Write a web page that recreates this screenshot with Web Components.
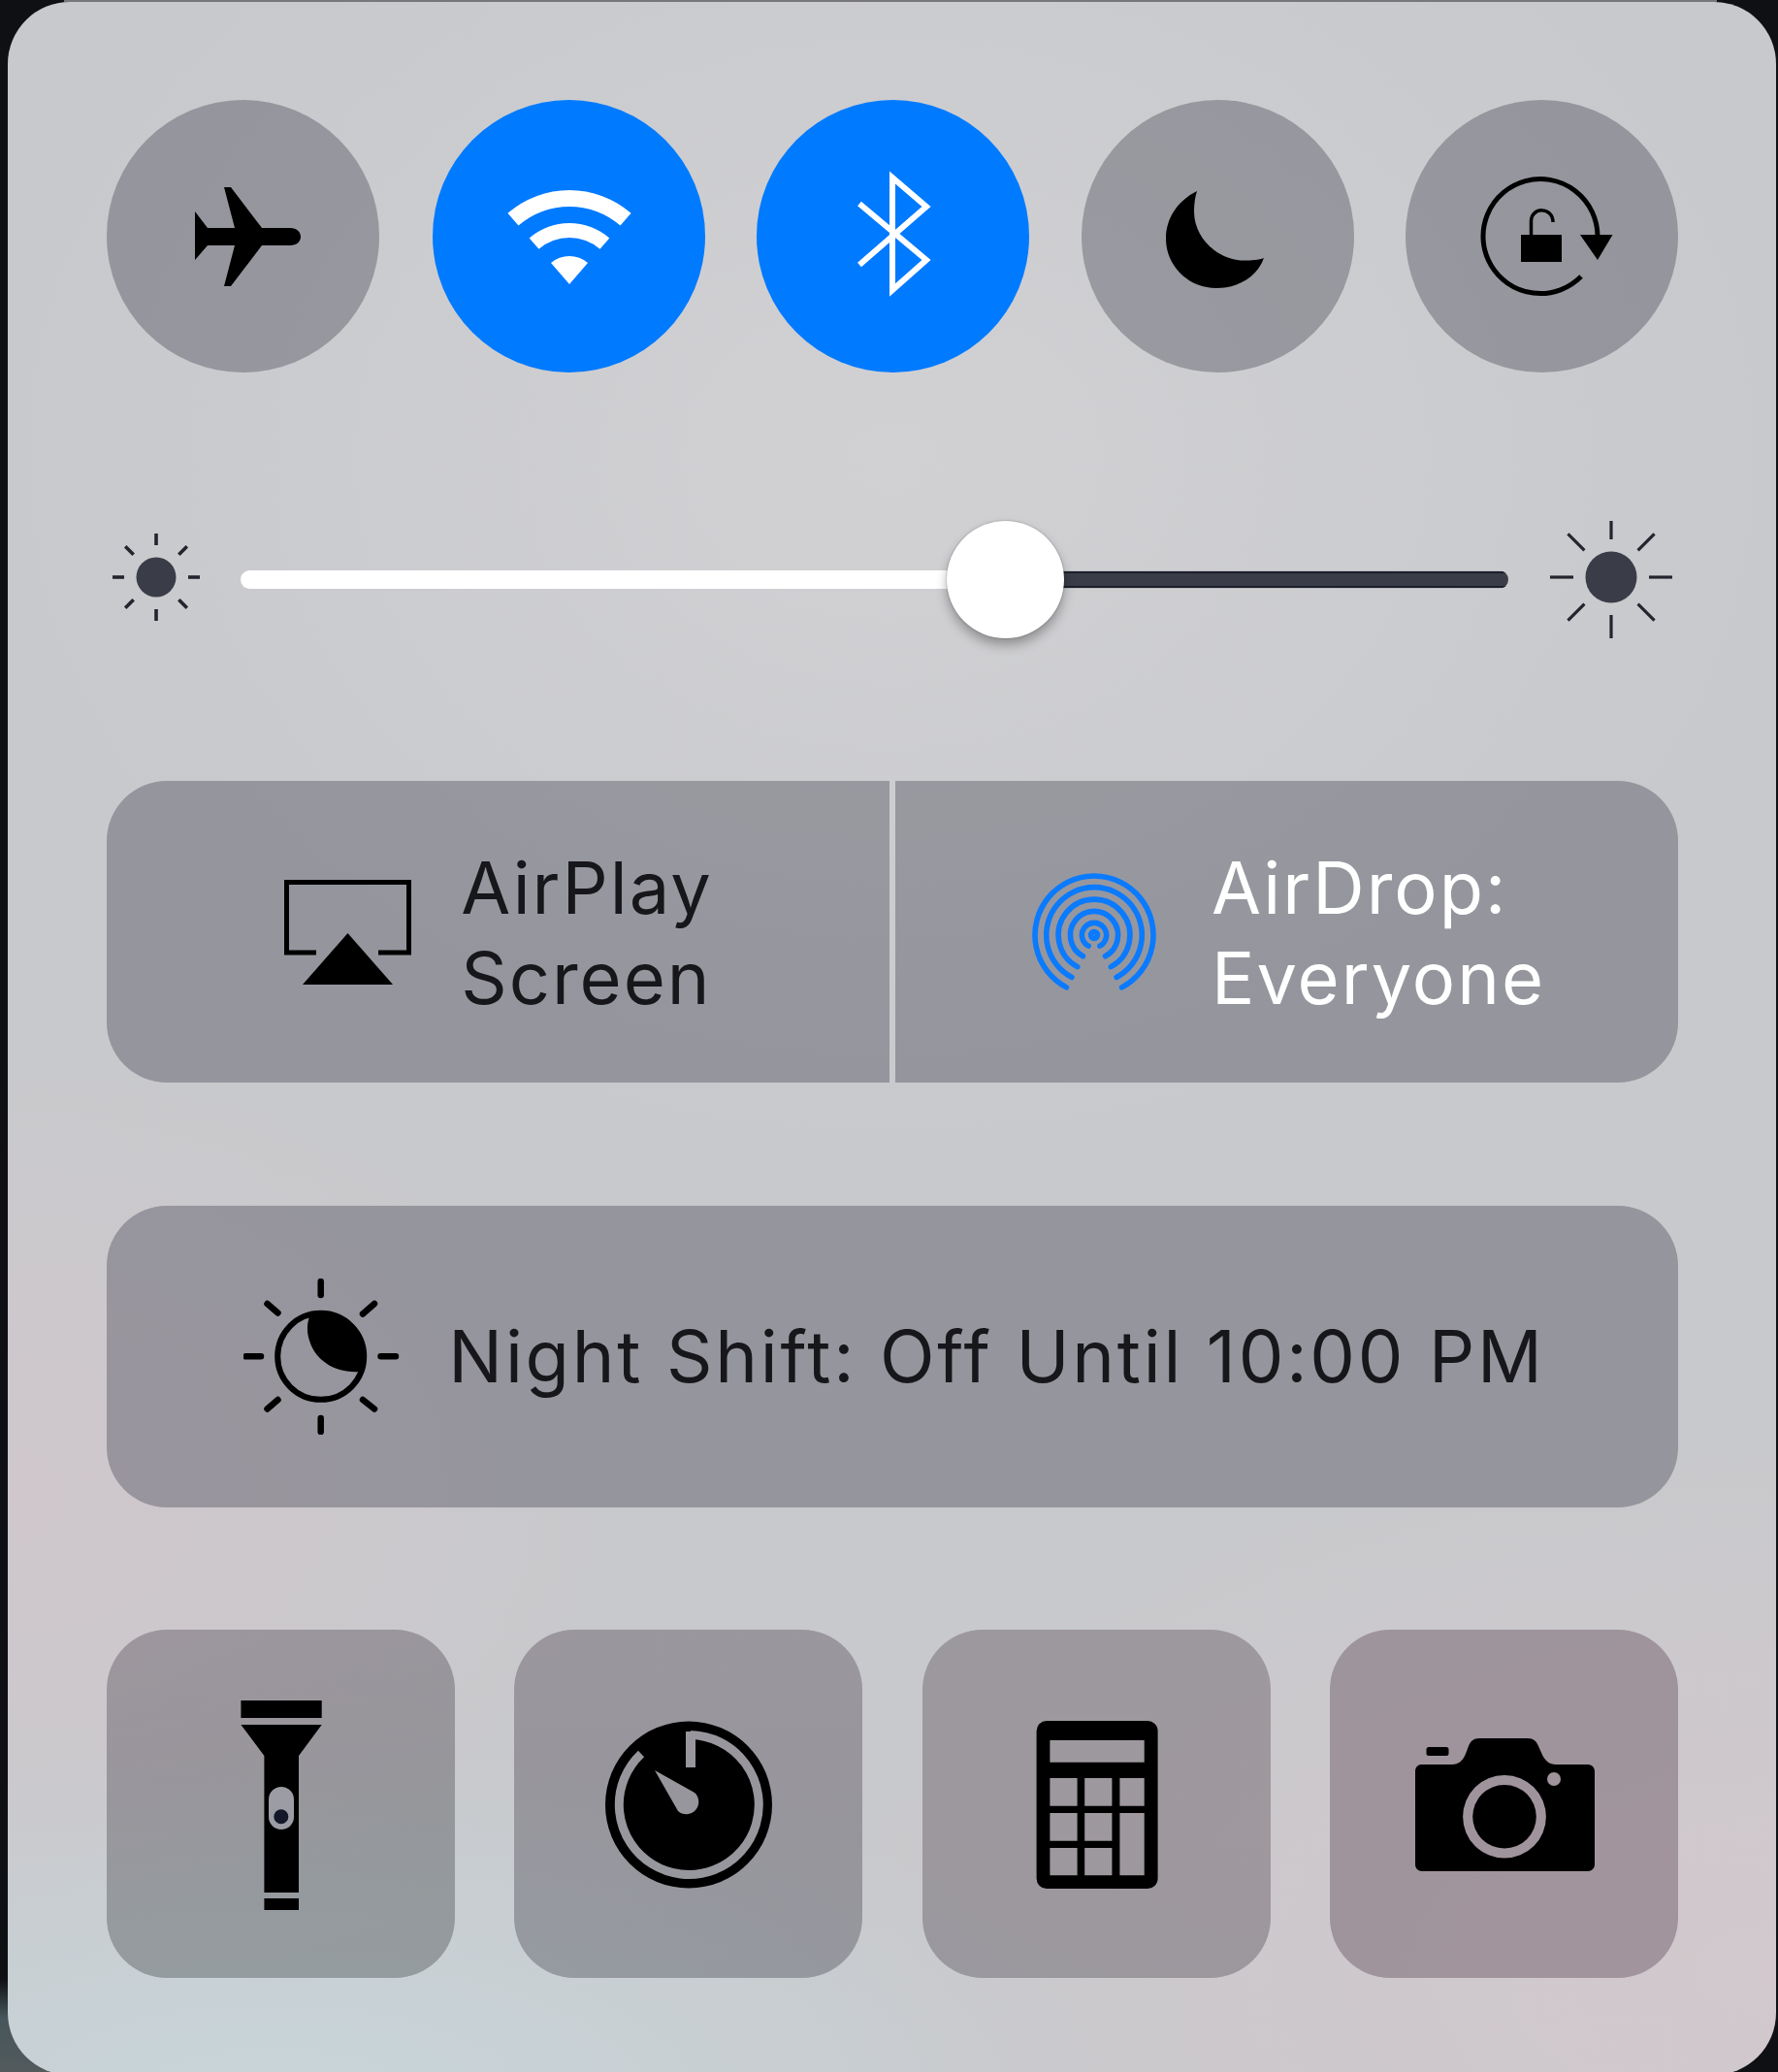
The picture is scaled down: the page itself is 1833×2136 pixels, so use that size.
<!DOCTYPE html>
<html lang="en">
<head>
<meta charset="utf-8">
<title>Control Center</title>
<style>
  html, body { margin: 0; height: 2136px; overflow: hidden; }
  body {
    background:
      linear-gradient(90deg, transparent 66px, #77777b 66px, #77777b 1770px, transparent 1770px) 0 0 / 100% 2px no-repeat,
      linear-gradient(180deg, transparent 2040px, #46565a 2080px, #525a5c 2136px) 0 0 / 60px 100% no-repeat,
      #0f1014;
    font-family: Inter, "Liberation Sans", sans-serif;
  }
</style>
</head>
<body>
<cc-panel>
  <cc-row>
    <cc-toggle><cc-icon name="plane"></cc-icon></cc-toggle>
    <cc-toggle active><cc-icon name="wifi"></cc-icon></cc-toggle>
    <cc-toggle active><cc-icon name="bluetooth"></cc-icon></cc-toggle>
    <cc-toggle><cc-icon name="moon"></cc-icon></cc-toggle>
    <cc-toggle><cc-icon name="lock"></cc-icon></cc-toggle>
  </cc-row>
  <cc-slider></cc-slider>
  <cc-split>
    <cc-tile side="left"><cc-icon slot="icon" name="airplay"></cc-icon>AirPlay<br>Screen</cc-tile>
    <cc-tile side="right" light><cc-icon slot="icon" name="airdrop"></cc-icon>AirDrop:<br>Everyone</cc-tile>
  </cc-split>
  <cc-tile wide><cc-icon slot="icon" name="nightshift"></cc-icon>Night Shift: Off Until 10:00 PM</cc-tile>
  <cc-shortcuts>
    <cc-shortcut style="--tint: linear-gradient(165deg, rgba(26,14,30,.27) 10%, rgba(8,12,14,.27) 85%)"><cc-icon name="flashlight"></cc-icon></cc-shortcut>
    <cc-shortcut style="--tint: linear-gradient(rgba(30,14,30,.27), rgba(12,10,24,.27))"><cc-icon name="timer"></cc-icon></cc-shortcut>
    <cc-shortcut style="--tint: linear-gradient(rgba(37,22,33,.27) 60%, rgba(24,18,30,.27))"><cc-icon name="calculator"></cc-icon></cc-shortcut>
    <cc-shortcut style="--tint: rgba(37,7,26,.27)"><cc-icon name="camera"></cc-icon></cc-shortcut>
  </cc-shortcuts>
</cc-panel>
<script>
// coordinates below are the reference's own pixels, the viewBox does the offset
function airdropArcs() {
    const cx = 128, cy = 65;
    let out = '';
    [61, 49.3, 36.9, 24.6, 12.6].forEach(r => {
        const dx = (r * 0.469).toFixed(1), dy = (r * 0.883).toFixed(1);
        out += `<path d="M${cx - dx} ${cy + +dy}A${r} ${r} 0 1 1 ${cx + +dx} ${cy + +dy}"/>`;
    });
    return out + `<circle cx="${cx}" cy="${cy}" r="3.4"/>`;
}

function sunRays(cx, cy, inner, outer, width, color) {
    let out = '';
    for (let a = 0; a < 8; a++) {
        const t = a * Math.PI / 4, c = Math.cos(t), s = Math.sin(t);
        out += `<line x1="${cx + inner * c}" y1="${cy + inner * s}" x2="${cx + outer * c}" y2="${cy + outer * s}"/>`;
    }
    return `<g stroke="${color}" stroke-width="${width}">${out}</g>`;
}

const icons = {
    plane: { box: '110 103 281 281', body: `
        <path d="M201 218L214 235H242L231 193H238L270 235H299C306 235 310 239 310 244C310 249 306 253 299 253H270L238 295H231L242 253H214L201 268Z"/>` },
    wifi: { box: '446 103 281 281', body: `<g fill="#fff">
        <path d="M523.4 219.8A97 97 0 0 1 650.6 219.8L639.5 232.6A80 80 0 0 0 534.5 232.6Z"/>
        <path d="M545.7 245.4A63 63 0 0 1 628.3 245.4L618.5 256.8A48 48 0 0 0 555.5 256.8Z"/>
        <path d="M568 271.1A29 29 0 0 1 606 271.1L587 293Z"/></g>` },
    bluetooth: { box: '780 103 281 281', body: `
        <path d="M886 210L955 268L920 299V183L955 213L886 273" fill="none" stroke="#fff" stroke-width="6"/>` },
    moon: { box: '1116 103 281 281', body: `
        <path d="M1235 197C1215 207 1203 225 1203 246C1203 274 1226 297 1255 297C1278 297 1297 285 1304 266C1299 268 1290 268.5 1284 268.5C1256 268.5 1232 245 1232 218C1232 210 1233 203 1235 197Z"/>` },
    lock: { box: '1449 103 281 281', body: `
        <path d="M1630 285A59 59 0 1 1 1647 243.5" fill="none" stroke="#000" stroke-width="5"/>
        <path d="M1629 242H1662.5L1647 268Z"/>
        <path d="M1568 242H1610V270H1568Z"/>
        <path d="M1578.5 243V228C1578.5 213 1601 213 1601 229" fill="none" stroke="#000" stroke-width="3.5"/>` },
    sunSmall: { box: '116 537 90 121', body: `
        <circle cx="161" cy="595" r="20.5" fill="#3a3c48"/>${sunRays(161, 595, 33, 45, 3.6, '#22242e')}` },
    sunBig: { box: '1598 537 126 121', body: `
        <circle cx="1661" cy="595" r="26.5" fill="#3a3c48"/>${sunRays(1661, 595, 39, 63, 3.2, '#22242e')}` },
    airplay: { box: '293 910 131 108', body: `
        <path d="M326 985H295.5V912.5H421.5V985H390" fill="none" stroke="#000" stroke-width="5"/>
        <path d="M358.5 965L405 1018H312Z"/>` },
    airdrop: { box: '63 0 130 124', body: `
        <g fill="none" stroke="#0a7aff" stroke-width="5.6" stroke-linecap="round">${airdropArcs()}</g>` },
    nightshift: { box: '252 1318 161 161', body: `
        <circle cx="331.7" cy="1398.3" r="44.5" fill="none" stroke="#000" stroke-width="6"/>
        <g stroke="#000" stroke-width="6.5" stroke-linecap="round">
          <path d="M331.7 1321V1335M331.7 1462V1476M254.5 1398.3H270M393.5 1398.3H409"/>
          <path d="M276.5 1344L287.5 1353.5M387 1344L375 1354.5M276.5 1452.5L287.5 1443M387 1452.5L375 1443"/>
        </g>
        <path d="M322 1353C317 1362 317 1373 320 1382C326 1402 346 1416 372 1414A45 45 0 0 0 322 1353Z"/>` },
    flashlight: { box: '110 1680 359 359', body: `
        <path d="M248.4 1753H331.7V1771H248.4Z"/>
        <path d="M248.4 1778H331.7L308 1810V1951H272.4V1810Z"/>
        <path d="M272.4 1957H308V1969H272.4Z"/>
        <rect x="277" y="1842" width="26" height="44" rx="13" fill="#9c9da4"/>
        <circle cx="289.8" cy="1872.7" r="7.5" fill="#14182a"/>` },
    timer: { box: '530 1680 359 359', body: `
        <mask id="m" maskUnits="userSpaceOnUse" x="600" y="1750" width="220" height="220">
          <rect x="600" y="1750" width="220" height="220" fill="#fff"/>
          <path d="M712 1788.5A72 72 0 1 1 661 1808" fill="none" stroke="#000" stroke-width="9"/>
          <path d="M707 1785H717V1822H707Z" fill="#000"/>
          <path d="M675 1825L716 1848A12.5 12.5 0 1 1 699 1867Z" fill="#000"/>
        </mask>
        <circle cx="710" cy="1860.5" r="86" mask="url(#m)"/>` },
    calculator: { box: '950 1680 359 359', body: `
        <path fill-rule="evenodd" d="M1078 1774H1182A10.5 10.5 0 0 1 1192.6 1784.5V1936.5A10.5 10.5 0 0 1 1182 1947H1078A10.5 10.5 0 0 1 1067.6 1936.5V1784.5A10.5 10.5 0 0 1 1078 1774Z
          M1081.4 1794V1816.7H1178.7V1794Z
          M1081.4 1833V1861.7H1109.6V1833Z M1117.2 1833V1861.7H1145.4V1833Z M1153.4 1833V1861.7H1178.7V1833Z
          M1081.4 1869V1897.7H1109.6V1869Z M1117.2 1869V1897.7H1145.4V1869Z M1153.4 1869V1933.3H1178.7V1869Z
          M1081.4 1905V1933.3H1109.6V1905Z M1117.2 1905V1933.3H1145.4V1905Z"/>` },
    camera: { box: '1370 1680 359 359', body: `
        <path fill-rule="evenodd" d="M1464 1819H1496C1503 1819 1507 1815 1510 1808L1513 1800C1515 1795 1518 1792 1524 1792H1574C1580 1792 1583 1795 1585 1800L1589 1809C1592 1815 1596 1819 1603 1819H1636C1640 1819 1643 1822 1643 1826V1922C1643 1926 1640 1929 1636 1929H1465C1461 1929 1458 1926 1458 1922V1826C1458 1822 1461 1819 1464 1819Z
          M1550 1830A42.8 42.8 0 1 0 1550 1915.6A42.8 42.8 0 1 0 1550 1830Z
          M1608 1834A7 7 0 1 0 1594 1834A7 7 0 1 0 1608 1834Z"/>
        <circle cx="1550" cy="1872.8" r="32.8"/>
        <rect x="1469.5" y="1801" width="23" height="9" rx="2.5"/>` }
};

class CcIcon extends HTMLElement {
    connectedCallback() {
        const icon = icons[this.getAttribute('name')];
        const size = icon.box.split(' ');
        const root = this.attachShadow({ mode: 'open' });
        root.innerHTML = `
            <style>
                :host { display: block; line-height: 0; }
                svg { display: block; }
            </style>
            <svg viewBox="${icon.box}" width="${size[2]}" height="${size[3]}">${icon.body}</svg>`;
    }
}

class CcPanel extends HTMLElement {
    constructor() {
        super();
        this.attachShadow({ mode: 'open' }).innerHTML = `
            <style>
                :host {
                    display: flex;
                    flex-direction: column;
                    box-sizing: border-box;
                    width: 1823px;
                    height: 2137px;
                    margin: 2px 0 0 8px;
                    padding: 101px 101px 0 102px;
                    border-radius: 64px;
                    filter: blur(.6px);
                    background:
                        radial-gradient(640px 460px at 0% 72%, rgba(212,198,204,.6), transparent),
                        radial-gradient(1000px 560px at 100% 95%, rgba(212,200,205,.85), transparent),
                        radial-gradient(900px 380px at 15% 102%, rgba(200,214,218,1), transparent),
                        radial-gradient(900px 700px at 50% 22%, #d1d1d4, transparent),
                        #c8c9cc;
                }
            </style>
            <slot></slot>`;
    }
}

class CcRow extends HTMLElement {
    constructor() {
        super();
        this.attachShadow({ mode: 'open' }).innerHTML = `
            <style>
                :host { display: flex; flex: none; }
                ::slotted(:nth-child(2)) { margin-left: 55px; }
                ::slotted(:nth-child(3)) { margin-left: 53px; }
                ::slotted(:nth-child(4)) { margin-left: 54px; }
                ::slotted(:nth-child(5)) { margin-left: 53px; }
            </style>
            <slot></slot>`;
    }
}

class CcToggle extends HTMLElement {
    constructor() {
        super();
        this.attachShadow({ mode: 'open' }).innerHTML = `
            <style>
                :host {
                    display: block;
                    width: 281px;
                    height: 281px;
                    border-radius: 50%;
                    background: rgba(10, 10, 28, .27);
                }
                :host([active]) { background: #007aff; }
            </style>
            <slot></slot>`;
    }
}

class CcSlider extends HTMLElement {
    constructor() {
        super();
        this.attachShadow({ mode: 'open' }).innerHTML = `
            <style>
                :host {
                    display: flex;
                    align-items: center;
                    flex: none;
                    height: 121px;
                    margin-top: 153px;
                    padding: 0 6px;
                }
                .track {
                    position: relative;
                    flex: 1;
                    height: 19px;
                    margin: 0 43px 0 42px;
                    border-radius: 10px;
                    background: linear-gradient(90deg, #fff 790px, transparent 790px),
                        linear-gradient(#b9babd 0 1px, #1c1e2c 1px 3px, #3a3c47 3px 16px, #1c1e2c 16px 18px, #b9babd 18px);
                }
                .thumb {
                    position: absolute;
                    left: 728px;
                    top: -51px;
                    width: 121px;
                    height: 121px;
                    border-radius: 50%;
                    background: #fff;
                    box-shadow: 0 0 2px rgba(0, 0, 0, .35), 0 7px 12px rgba(0, 0, 0, .3);
                }
            </style>
            <cc-icon name="sunSmall"></cc-icon>
            <div class="track"><div class="thumb"></div></div>
            <cc-icon name="sunBig"></cc-icon>`;
    }
}

class CcSplit extends HTMLElement {
    constructor() {
        super();
        this.attachShadow({ mode: 'open' }).innerHTML = `
            <style>
                :host {
                    display: grid;
                    grid-template-columns: 807px 807px;
                    gap: 6px;
                    flex: none;
                    height: 311px;
                    margin-top: 147px;
                }
            </style>
            <slot></slot>`;
    }
}

class CcTile extends HTMLElement {
    constructor() {
        super();
        this.attachShadow({ mode: 'open' }).innerHTML = `
            <style>
                :host {
                    display: flex;
                    align-items: center;
                    justify-content: center;
                    gap: 51px;
                    padding-left: 1px;
                    background: rgba(10, 10, 28, .27);
                    color: #16161b;
                    font: 400 74px/93px Inter, "Liberation Sans", sans-serif;
                    letter-spacing: 2px;
                }
                :host([side=left]) { border-radius: 62px 0 0 62px; }
                :host([side=right]) { border-radius: 0 62px 62px 0; gap: 56px; padding-left: 3px; }
                :host([side]) .label { padding-top: 3px; }
                :host([light]) { color: #fff; }
                :host([wide]) {
                    flex: none;
                    height: 311px;
                    margin-top: 127px;
                    padding-left: 4px;
                    gap: 50px;
                    border-radius: 62px;
                    letter-spacing: 2.8px;
                }
            </style>
            <slot name="icon"></slot>
            <div class="label"><slot></slot></div>`;
    }
}

class CcShortcuts extends HTMLElement {
    constructor() {
        super();
        this.attachShadow({ mode: 'open' }).innerHTML = `
            <style>
                :host {
                    display: grid;
                    grid-template-columns: repeat(4, 359px);
                    justify-content: space-between;
                    flex: none;
                    margin-top: 126px;
                }
            </style>
            <slot></slot>`;
    }
}

class CcShortcut extends HTMLElement {
    constructor() {
        super();
        this.attachShadow({ mode: 'open' }).innerHTML = `
            <style>
                :host {
                    display: block;
                    height: 359px;
                    border-radius: 62px;
                    background: var(--tint, rgba(10, 10, 28, .27));
                }
            </style>
            <slot></slot>`;
    }
}

customElements.define('cc-icon', CcIcon);
customElements.define('cc-panel', CcPanel);
customElements.define('cc-row', CcRow);
customElements.define('cc-toggle', CcToggle);
customElements.define('cc-slider', CcSlider);
customElements.define('cc-split', CcSplit);
customElements.define('cc-tile', CcTile);
customElements.define('cc-shortcuts', CcShortcuts);
customElements.define('cc-shortcut', CcShortcut);
</script>
</body>
</html>
